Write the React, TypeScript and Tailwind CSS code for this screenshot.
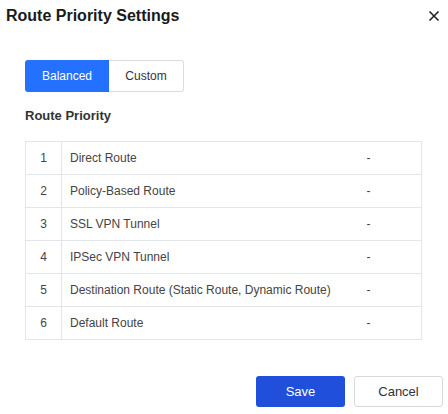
import React from 'react';

const rows = [
  'Direct Route',
  'Policy-Based Route',
  'SSL VPN Tunnel',
  'IPSec VPN Tunnel',
  'Destination Route (Static Route, Dynamic Route)',
  'Default Route',
];

export default function App() {
  return (
    <div className="w-[448px] h-[414px] bg-white flex flex-col font-['Liberation_Sans',Arial,sans-serif] text-[#333]">
      {/* Header */}
      <div className="h-8 flex items-center justify-between pl-[6px] pr-[8px]">
        <h1 className="text-[16px] font-bold text-[#1a1a1a]">Route Priority Settings</h1>
        <svg width="12" height="12" viewBox="0 0 12 12" className="text-[#222]">
          <path d="M1.5 1.5 L10.5 10.5 M10.5 1.5 L1.5 10.5" stroke="currentColor" strokeWidth="1.6" />
        </svg>
      </div>

      <div className="px-[25px] pt-[28px] flex flex-col">
        {/* Segmented control */}
        <div className="flex h-8 w-[159px] text-[12px]">
          <button className="w-[84px] bg-[#2470ff] text-white rounded-l-[3px]">Balanced</button>
          <button className="flex-1 border border-l-0 border-[#dcdcdc] rounded-r-[3px] text-[#333]">Custom</button>
        </div>

        <div className="mt-[16px] h-4 flex items-center text-[13px] font-bold text-[#333]">Route Priority</div>

        {/* Table */}
        <table className="mt-[17px] w-[397px] border-collapse text-[12px] text-[#444]">
          <tbody>
            {rows.map((r, i) => (
              <tr key={r} className="h-[33px]">
                <td className="w-[36px] border border-[#e2e5ec] text-center">{i + 1}</td>
                <td className="w-[297px] border-y border-[#e2e5ec] pl-[8px]">{r}</td>
                <td className="border border-l-0 border-[#e2e5ec] pl-[8px]">-</td>
              </tr>
            ))}
          </tbody>
        </table>
      </div>

      {/* Footer */}
      <div className="mt-auto mb-[7px] flex justify-end gap-[9px] pr-[5px]">
        <button className="w-[89px] h-[31px] rounded-[3px] bg-[#1f4fdb] text-white text-[13px]">Save</button>
        <button className="w-[89px] h-[31px] rounded-[3px] border border-[#d9d9d9] bg-white text-[13px] text-[#333]">Cancel</button>
      </div>
    </div>
  );
}
